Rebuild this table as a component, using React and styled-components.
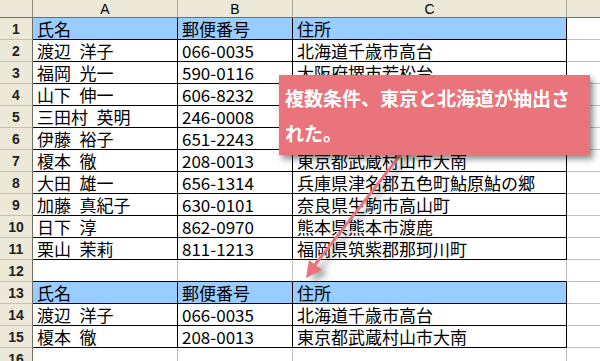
import React from "react"
import styled, { createGlobalStyle } from "styled-components"

const GlobalStyle = createGlobalStyle`
  html, body {
    margin: 0;
    padding: 0;
    background: #ffffff;
  }
`

const Sheet = styled.div`
  position: relative;
  width: 600px;
  height: 361px;
  overflow: hidden;
  background: #fff;
`

const Grid = styled.div`
  display: grid;
  grid-template-columns: 33px 145px 115px 274px 80px;
  grid-template-rows: 18px repeat(16, 22px);
  font-family: "Noto Sans CJK JP", "Noto Sans", sans-serif;
`

const Corner = styled.div`
  background: #ece9d8;
  border-right: 1px solid #8c8a7c;
  border-bottom: 1px solid #716f64;
`

const ColHead = styled.div`
  background: #ece9d8;
  border-right: 1px solid #a9a696;
  border-bottom: 1px solid #716f64;
  display: flex;
  align-items: flex-end;
  justify-content: center;
  box-sizing: border-box;
  font-family: "Liberation Sans", Arial, sans-serif;
  font-size: 14px;
  line-height: 16px;
  color: #000;
`

const RowHead = styled.div`
  background: #ece9d8;
  border-right: 1px solid #716f64;
  border-bottom: 1px solid #c5c2b2;
  display: flex;
  align-items: flex-end;
  justify-content: center;
  padding-bottom: 2px;
  box-sizing: border-box;
  font-family: "Liberation Sans", Arial, sans-serif;
  font-size: 14px;
  line-height: 16px;
  font-weight: bold;
  color: #222;
`

const Cell = styled.div`
  box-sizing: border-box;
  display: flex;
  align-items: center;
  padding-left: 4px;
  white-space: nowrap;
  font-size: 17px;
  line-height: 20px;
  color: #000;
  background: ${p => (p.$head ? "#99ccff" : "#fff")};
  border-right: 1px solid ${p => (p.$boxed ? "#000" : "#c0c0c0")};
  border-bottom: 1px solid ${p => (p.$boxed || p.$darkBottom ? "#000" : "#c0c0c0")};
`

const Callout = styled.div`
  position: absolute;
  left: 279px;
  top: 75px;
  width: 311px;
  box-sizing: border-box;
  padding: 5px 12px 5px 6px;
  background: #e9747b;
  color: #fff;
  font-family: "Noto Sans CJK JP", sans-serif;
  font-weight: bold;
  font-size: 19px;
  line-height: 35px;
  box-shadow: 3px 4px 6px rgba(0, 0, 0, 0.45);
`

const Arrow = styled.svg`
  position: absolute;
  left: 0;
  top: 0;
  filter: drop-shadow(6px 4px 3px rgba(0, 0, 0, 0.35));
`

const rows = [
  ["氏名", "郵便番号", "住所", true],
  ["渡辺\u2002洋子", "066-0035", "北海道千歳市高台"],
  ["福岡\u2002光一", "590-0116", "大阪府堺市若松台"],
  ["山下\u2002伸一", "606-8232", "京都府京都市左京区"],
  ["三田村\u2002英明", "246-0008", "神奈川県横浜市瀬谷区"],
  ["伊藤\u2002裕子", "651-2243", "兵庫県神戸市西区"],
  ["榎本\u2002徹", "208-0013", "東京都武蔵村山市大南"],
  ["大田\u2002雄一", "656-1314", "兵庫県津名郡五色町鮎原鮎の郷"],
  ["加藤\u2002真紀子", "630-0101", "奈良県生駒市高山町"],
  ["日下\u2002淳", "862-0970", "熊本県熊本市渡鹿"],
  ["栗山\u2002茉莉", "811-1213", "福岡県筑紫郡那珂川町"],
  null,
  ["氏名", "郵便番号", "住所", true],
  ["渡辺\u2002洋子", "066-0035", "北海道千歳市高台"],
  ["榎本\u2002徹", "208-0013", "東京都武蔵村山市大南"],
  null,
]

export default function App() {
  return (
    <Sheet>
      <GlobalStyle />
      <Grid>
        <Corner />
        <ColHead>A</ColHead>
        <ColHead>B</ColHead>
        <ColHead>C</ColHead>
        <ColHead />
        {rows.map((row, i) => {
          const n = i + 1
          const darkBottom = rows[i + 1] != null && row == null
          return (
            <React.Fragment key={n}>
              <RowHead>{n}</RowHead>
              {[0, 1, 2].map(c => (
                <Cell
                  key={c}
                  $boxed={row != null}
                  $darkBottom={darkBottom}
                  $head={row && row[3]}
                >
                  {row ? row[c] : ""}
                </Cell>
              ))}
              <Cell />
            </React.Fragment>
          )
        })}
      </Grid>
      <Arrow width="600" height="361" viewBox="0 0 600 361">
        <line x1="412" y1="140" x2="314" y2="266" stroke="#e9747b" strokeWidth="3" />
        <polygon points="306,278 309,260 322,270" fill="#e9747b" />
      </Arrow>
      <Callout>複数条件、東京と北海道が抽出された。</Callout>
    </Sheet>
  )
}
